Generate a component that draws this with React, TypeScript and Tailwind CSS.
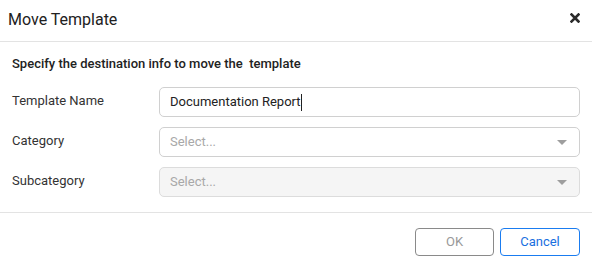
import React from "react";

function Caret() {
  return (
    <svg width="10" height="5" viewBox="0 0 10 5" className="shrink-0">
      <path d="M0 0 L10 0 L5 5 Z" fill="#9e9e9e" />
    </svg>
  );
}

export default function App() {
  return (
    <div
      className="w-[592px] h-[271px] bg-white flex flex-col text-[#333333]"
      style={{ fontFamily: "Roboto, 'Noto Sans', sans-serif" }}
    >
      <div className="h-[42px] flex items-center justify-between pl-2 pr-[12px] border-b border-[#e3e3e3] shrink-0">
        <div className="text-[16px] leading-[20px] text-[#212121] -mt-[2px]">Move Template</div>
        <svg width="10" height="10" viewBox="0 0 10 10" className="mt-[-6px]">
          <path d="M1.5 1.5 L8.5 8.5 M8.5 1.5 L1.5 8.5" stroke="#2b2b2b" strokeWidth="2.6" strokeLinecap="square" />
        </svg>
      </div>
      <div className="px-3 pt-[14px] pb-[15px] flex flex-col">
        <div className="text-[13px] leading-[16px] font-medium whitespace-pre text-[#222222]">
          Specify the destination info to move the  template
        </div>
        <div className="mt-[15px] flex flex-col gap-[10px]">
          <div className="flex items-center h-[30px]">
            <div className="w-[147px] text-[13px] leading-[16px] -mt-[3px]">Template Name</div>
            <div className="flex-1 h-[30px] border border-[#d0d0d0] rounded-[5px] flex items-center px-[10px] text-[13px] text-[#222222]">
              <span>Documentation Report</span>
              <span className="w-px h-[17px] bg-[#222222]"></span>
            </div>
          </div>
          <div className="flex items-center h-[30px]">
            <div className="w-[147px] text-[13px] leading-[16px] -mt-[3px]">Category</div>
            <div className="flex-1 h-[30px] border border-[#d0d0d0] rounded-[5px] flex items-center justify-between pl-[10px] pr-[12px] text-[13px] text-[#a8a8a8]">
              <span>Select...</span>
              <Caret />
            </div>
          </div>
          <div className="flex items-center h-[30px]">
            <div className="w-[147px] text-[13px] leading-[16px] -mt-[3px]">Subcategory</div>
            <div className="flex-1 h-[30px] border border-[#dcdcdc] bg-[#f5f5f5] rounded-[5px] flex items-center justify-between pl-[10px] pr-[12px] text-[13px] text-[#a8a8a8]">
              <span>Select...</span>
              <Caret />
            </div>
          </div>
        </div>
      </div>
      <div className="border-t border-[#e3e3e3] pt-[15px] pb-[15px] px-3 flex justify-end gap-[6px]">
        <button className="w-[79px] h-[28px] border border-[#8a8a8a] rounded-[4px] text-[13px] text-[#999999] bg-white">
          OK
        </button>
        <button className="w-[80px] h-[28px] border border-[#1a7cf0] rounded-[4px] text-[13px] text-[#1a6fe0] bg-white">
          Cancel
        </button>
      </div>
    </div>
  );
}
